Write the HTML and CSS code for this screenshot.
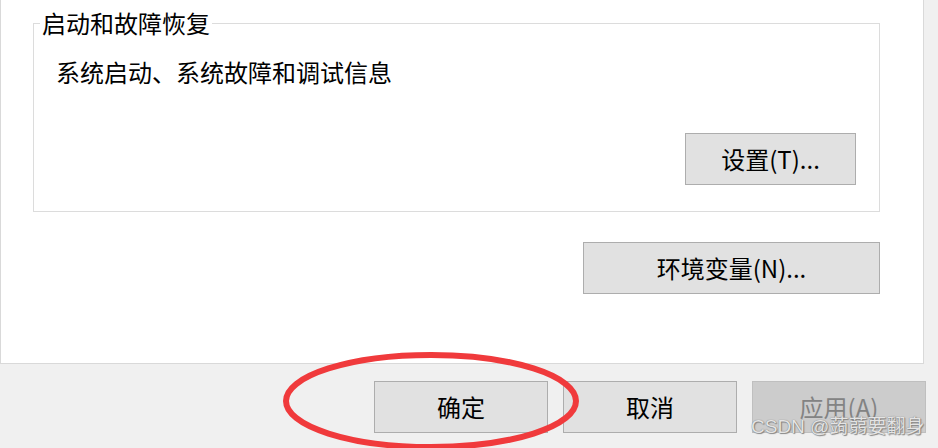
FILE: index.html
```html
<!DOCTYPE html>
<html lang="zh-CN">
<head>
    <meta charset="UTF-8">
    <meta name="viewport" content="width=device-width, initial-scale=1.0">
    <title>系统属性</title>
    <link rel="stylesheet" href="styles.css">
</head>
<body>
    <div class="panel">
        <fieldset class="group">
            <legend>启动和故障恢复</legend>
            <p class="group-text">系统启动、系统故障和调试信息</p>
            <div class="group-actions">
                <button class="btn btn-settings">设置(T)...</button>
            </div>
        </fieldset>
        <div class="env-row">
            <button class="btn btn-env">环境变量(N)...</button>
        </div>
    </div>

    <div class="footer">
        <button class="btn btn-footer">确定</button>
        <button class="btn btn-footer">取消</button>
        <button class="btn btn-footer" disabled>应用(A)</button>
    </div>

    <!-- 红圈标注 -->
    <svg class="mark" width="310" height="110" viewBox="0 0 310 110">
        <ellipse cx="148" cy="51" rx="145" ry="46" fill="none" stroke="#f03a3c" stroke-width="6"/>
    </svg>

    <div class="watermark">CSDN @蒟蒻要翻身</div>
</body>
</html>
```

FILE: styles.css
```css
* {
    margin: 0;
    padding: 0;
    box-sizing: border-box;
}

body {
    font-family: 'Noto Sans CJK SC', 'Noto Sans', sans-serif;
    background: #f0f0f0;
    color: #000;
    width: 938px;
    height: 448px;
    overflow: hidden;
    position: relative;
}

.panel {
    width: 924px;
    height: 364px;
    background: #fff;
    border: 1px solid #d9d9d9;
    border-top: none;
    padding: 11px 43px 0 32px;
}

.group {
    width: 847px;
    border: 1px solid #dcdcdc;
    padding: 0 23px 26px 22px;
}

.group legend {
    font-size: 24px;
    line-height: 24px;
    margin-left: -16px;
    padding: 0 2px;
}

.group-text {
    font-size: 24px;
    line-height: 24px;
    margin-top: 25px;
}

.group-actions {
    display: flex;
    justify-content: flex-end;
    margin-top: 49px;
}

.btn {
    font-family: inherit;
    font-size: 24px;
    line-height: 1;
    color: #000;
    background: #e1e1e1;
    border: 1px solid #adadad;
    height: 52px;
}

.btn-settings {
    width: 171px;
}

.env-row {
    display: flex;
    justify-content: flex-end;
    margin-top: 30px;
}

.btn-env {
    width: 297px;
}

.footer {
    display: flex;
    justify-content: flex-end;
    gap: 15px;
    padding: 17px 12px 0 0;
}

.btn-footer {
    width: 174px;
}

.btn-footer:disabled {
    background: #cccccc;
    border-color: #bfbfbf;
    color: #838383;
}

.mark {
    position: absolute;
    left: 283px;
    top: 350px;
}

.watermark {
    position: absolute;
    left: 751px;
    top: 415px;
    font-family: 'Liberation Sans', 'Noto Sans CJK SC', sans-serif;
    font-size: 19px;
    line-height: 24px;
    color: #e4e4e4;
    text-shadow: 0 0 1px #666, 1px 1px 1px #888;
    white-space: nowrap;
}
```
